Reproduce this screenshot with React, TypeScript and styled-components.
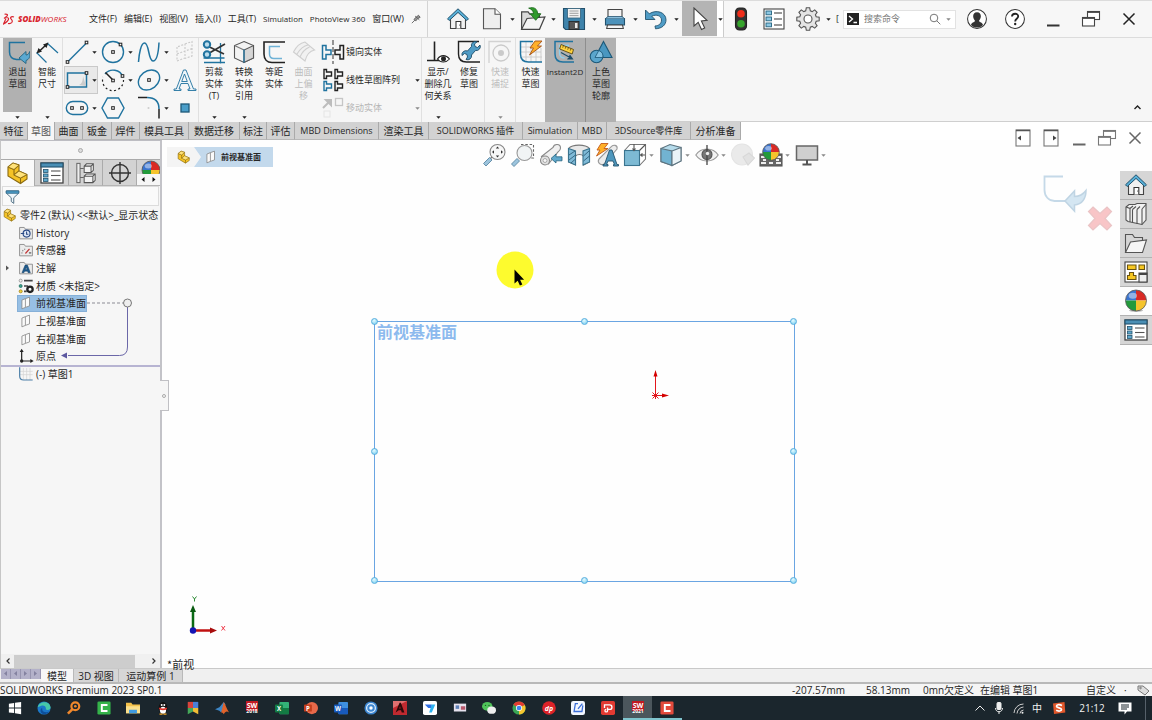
import React from "react";
import styled, { createGlobalStyle, css } from "styled-components";

const INK = "#3a3a3a";
const BLUE = "#20739f";
const SKY = "#6fb2d6";
const RED = "#d9252f";

const GlobalStyle = createGlobalStyle`
  *, *::before, *::after { box-sizing: border-box; }
  html, body { margin: 0; padding: 0; }
  body {
    font-family: "Open Sans", "Noto Sans CJK SC", sans-serif;
    font-size: 10px;
    line-height: 12px;
    color: #262626;
    background: #fff;
    overflow: hidden;
  }
  button, input { font: inherit; color: inherit; margin: 0; padding: 0; border: 0; background: none; }
  a { color: inherit; text-decoration: none; }
  svg { display: block; flex: none; }
`;

const Shell = styled.div`
  display: flex;
  flex-direction: column;
  min-height: 100vh;
`;

/* ---------- icon helper ---------- */

type IconProps = { s?: number; vb?: string; w?: number; h?: number; children?: React.ReactNode };
const Icon = ({ s = 24, w, h, vb = "0 0 24 24", children }: IconProps) => (
  <svg width={w ?? s} height={h ?? s} viewBox={vb} fill="none" stroke={INK} strokeWidth="1.1" aria-hidden="true">
    {children}
  </svg>
);

const Caret = ({ dim = false }: { dim?: boolean }) => (
  <svg width="5" height="3" viewBox="0 0 5 3" aria-hidden="true">
    <path d="M0.3 0.3h4.4L2.5 2.7z" fill={dim ? "#8a8a8a" : "#222"} />
  </svg>
);

const Node = ({ x, y }: { x: number; y: number }) => (
  <rect x={x - 1.3} y={y - 1.3} width="2.6" height="2.6" fill="#fff" stroke="#222" strokeWidth="1" />
);

/* ---------- drawings ---------- */

const HomeIcon = () => (
  <Icon>
    <path d="M4.5 11v10.5h15V11L12 4z" fill="#f1f1f1" stroke="#444" />
    <path d="M1.500 11.800 12 1.800l10.500 10-1.700 1.700L12 5.400 3.200 13.500z" fill="#58b0d8" stroke="#24536e" strokeWidth="1" />
    <path d="M10 21.500v-7h4.800v7" fill="#fff" stroke="#333" />
    <circle cx="13.500" cy="18" r="0.500" fill="#333" stroke="none" />
  </Icon>
);
const NewIcon = () => (
  <Icon>
    <path d="M3.500 1.800h11.500l5.500 5.500v14.500h-17z" fill="#eee" stroke="#555" />
    <path d="M15 1.800v5.500h5.500" fill="#fff" stroke="#555" />
  </Icon>
);
const OpenIcon = () => (
  <Icon s={26}>
    <path d="M1.500 21V5.500h6l1.500 2h9V21z" fill="#d9d9d9" stroke="#444" />
    <path d="M1.500 21.500 6.500 11.500l16.500-1.500-5 11.500z" fill="#f4f4f4" stroke="#444" />
    <path d="M8 2c5-1.500 8 .5 8.300 5.200h3l-4.800 6-5-6h3C12.300 4.500 11 3 8 2z" fill="#2f9a2b" stroke="#1e6b1d" strokeWidth=".8" />
  </Icon>
);
const SaveIcon = () => (
  <Icon>
    <path d="M1.500 1.500h21v21h-19l-2-2z" fill="#3e83ab" stroke="#23506c" />
    <rect x="5.500" y="1.500" width="13" height="9.500" fill="#f2f2f2" stroke="#35627c" strokeWidth=".8" />
    <path d="M7.500 4h9M7.500 6.300h9M7.500 8.600h9" stroke="#8a8a8a" strokeWidth=".8" />
    <rect x="7" y="14.500" width="10" height="8" fill="#555" stroke="#222" strokeWidth=".8" />
    <rect x="13" y="16" width="2.500" height="5" fill="#e9e9e9" stroke="none" />
  </Icon>
);
const PrintIcon = () => (
  <Icon>
    <path d="M5 12V2.500h14V12" fill="#f5f5f5" stroke="#444" />
    <path d="M2.500 11.500h19v6.500h-19z" fill="#4d92ba" stroke="#24536e" />
    <path d="M2.500 11.500 5 9.500h14l2.500 2" fill="#89bddb" stroke="#24536e" strokeWidth=".8" />
    <path d="M4.500 18h15l.8 3.500H3.700z" fill="#f5f5f5" stroke="#444" />
  </Icon>
);
const UndoIcon = () => (
  <Icon>
    <path d="M1.500 3v9.500h9.500L7.800 9.300c4.500-2.500 9.700-.5 9.700 3.700 0 3.500-2.500 5.700-6.500 6l.5 2.800c6.500-.3 10.500-3.800 10.500-9C22 5.500 12.500 2 5.300 6.800z" fill="#4f9cc6" stroke="#24536e" strokeWidth=".9" />
  </Icon>
);
const PointerIcon = () => (
  <Icon>
    <path d="M6 1v18l4.200-3.700 3.300 7.200 3.200-1.500-3.300-7 5.600-.6z" fill="#fff" stroke="#444" />
  </Icon>
);
const TrafficIcon = () => (
  <Icon>
    <rect x="6.500" y="1" width="11" height="22" rx="4" fill="#333" stroke="#222" />
    <circle cx="12" cy="6.800" r="3.800" fill="#ef2d1a" stroke="none" />
    <circle cx="12" cy="16.800" r="3.800" fill="#37a52d" stroke="none" />
  </Icon>
);
const ListIcon = () => (
  <Icon>
    <rect x="2" y="2" width="20" height="20" fill="#fff" stroke="#444" />
    {[4, 10, 16].map((y) => (
      <g key={y}>
        <rect x="4" y={y} width="5.500" height="3.800" fill="#8cc8e4" stroke="#24637f" strokeWidth=".9" />
        <path d={`M12 ${y + 2}h8`} stroke="#444" />
      </g>
    ))}
  </Icon>
);
const GearIcon = () => (
  <Icon>
    <path
      d="M10.300 1.500h3.400l.6 3 1.900.8 2.500-1.700 2.400 2.400-1.700 2.500.8 1.900 3 .6v3.400l-3 .6-.8 1.900 1.700 2.500-2.400 2.400-2.500-1.700-1.900.8-.6 3h-3.400l-.6-3-1.900-.8-2.500 1.700-2.400-2.400 1.700-2.500-.8-1.900-3-.6v-3.400l3-.6.8-1.900-1.700-2.500 2.400-2.400 2.500 1.700 1.900-.8z"
      fill="#e4e4e4"
      stroke="#555"
      transform="translate(0 -.7)"
    />
    <circle cx="12" cy="12" r="4" fill="#fff" stroke="#555" />
  </Icon>
);
const PinIcon = () => (
  <Icon s={10}>
    <path d="M10 5 20 14M18 3l4 5-6 3-5 6-4-4 5-5zM9 15l-7 7" stroke="#555" strokeWidth="2" fill="#999" />
  </Icon>
);
const UserIcon = () => (
  <Icon s={22}>
    <circle cx="12" cy="12" r="10.300" fill="#fff" stroke="#333" />
    <path d="M12 4.500c3 0 4.200 2 4.200 4.500S14.800 13 14.200 14c0 1.500 4 1.800 4.300 4.500-3.500 3.800-9.500 3.800-13 0C5.800 15.800 9.800 15.500 9.800 14 9.200 13 7.800 11.500 7.800 9S9 4.500 12 4.500z" fill="#333" stroke="none" />
  </Icon>
);
const HelpIcon = () => (
  <Icon s={22}>
    <circle cx="12" cy="12" r="10.300" fill="#fff" stroke="#333" />
    <path d="M8.700 9.300c.2-4 6.800-4 6.800-.2 0 2.700-3.300 2.500-3.300 5.500" stroke="#222" strokeWidth="2" />
    <circle cx="12.200" cy="17.500" r="1.300" fill="#222" stroke="none" />
  </Icon>
);
const MinIcon = ({ c = "#333" }: { c?: string }) => (
  <Icon w={20} h={20} vb="0 0 20 20">
    <path d="M4 16.500h12.500" stroke={c} strokeWidth="2" />
  </Icon>
);
const RestoreIcon = ({ c = "#444" }: { c?: string }) => (
  <Icon w={20} h={20} vb="0 0 20 20">
    <rect x="6.500" y="2.500" width="12" height="8" fill="#fff" stroke={c} />
    <path d="M6 3h13" stroke={c} strokeWidth="1.800" />
    <rect x="1.500" y="8.500" width="12" height="8.500" fill="#fff" stroke={c} />
    <path d="M1 9h13" stroke={c} strokeWidth="1.800" />
  </Icon>
);
const CloseIcon = ({ c = "#222" }: { c?: string }) => (
  <Icon w={20} h={20} vb="0 0 20 20">
    <path d="m4.500 4.500 11 11m0-11-11 11" stroke={c} strokeWidth="1.500" />
  </Icon>
);
const PageArrowIcon = ({ right = false }: { right?: boolean }) => (
  <Icon w={20} h={20} vb="0 0 20 20">
    <rect x="3" y="2" width="14" height="16" stroke="#777" fill="#fff" />
    <path d="M3 2.500h14" stroke="#555" strokeWidth="1.500" />
    <path d={right ? "M12 7.500v5l3.500-2.500z" : "M8 7.500v5L4.500 10z"} fill="#444" stroke="none" />
  </Icon>
);

/* ribbon drawings */
const ExitSketchIcon = () => (
  <Icon>
    <path d="M19 2.500H3.500V12c0 4 2.500 7 7 7.500h4" stroke={BLUE} strokeWidth="1.500" />
    <path d="M13 18 20 11.500v3.500c1.500 0 3-1 3.700-3.500.8 5.500-.7 8-3.700 9v3z" fill="#5aa9d2" stroke="#24637f" strokeWidth=".9" />
  </Icon>
);
const DimensionIcon = () => (
  <Icon>
    <path d="m1.500 12.500 10 10M12 3l11 10" stroke={BLUE} strokeWidth="1.200" />
    <path d="M3.500 12 12 4" stroke="#222" strokeWidth="1.500" />
    <path d="m1.500 13.500 2-5.500 3.500 3.500zM13.500 2.500l-2 5.500L8 4.500z" fill="#222" stroke="none" />
  </Icon>
);
const LineIcon = () => (
  <Icon>
    <path d="M3 21.500 21.500 3" stroke={BLUE} strokeWidth="1.400" />
    <Node x={2.500} y={22} /><Node x={21.500} y={2.500} />
  </Icon>
);
const CircleIcon = () => (
  <Icon>
    <circle cx="12" cy="12" r="10.500" stroke={BLUE} strokeWidth="1.400" />
    <Node x={12} y={12} /><Node x={19.500} y={4.500} />
  </Icon>
);
const SplineIcon = () => (
  <Icon>
    <path d="M1.500 22C2 14 4 3 7.500 3c5 0 3.500 18 8.500 18 4 0 5.500-9 6-18.500" stroke={BLUE} strokeWidth="1.500" />
  </Icon>
);
const PlaneGhostIcon = () => (
  <Icon>
    <path d="M4 7v14l8-3V4zM12 4l7-2.500V16l-7 2.500M4 14l15-5.500" stroke="#c9c9c9" strokeDasharray="2 1.500" />
  </Icon>
);
const RectIcon = () => (
  <Icon>
    <rect x="2.500" y="5" width="19" height="14" fill="#eee" stroke={BLUE} strokeWidth="1.500" />
    <path d="M14 17c3-1 4-5 4-9l3 10z" fill="#ccc" stroke="none" />
    <Node x={2.500} y={19} /><Node x={21.500} y={5} />
  </Icon>
);
const ArcIcon = () => (
  <Icon>
    <path d="M4 6A10.500 10.500 0 0 1 22 9" stroke={BLUE} strokeWidth="1.400" />
    <path d="M22.500 12A10.500 10.500 0 1 1 2 9" stroke="#222" strokeDasharray="2 2.500" strokeWidth="1.200" />
    <path d="M4.500 4.500 12 12" stroke="#222" strokeWidth="1.500" />
    <Node x={12} y={12.500} /><Node x={21.500} y={8} />
  </Icon>
);
const EllipseIcon = () => (
  <Icon>
    <ellipse cx="12" cy="12" rx="11.500" ry="9" transform="rotate(-38 12 12)" stroke={BLUE} strokeWidth="1.400" />
    <Node x={12} y={12} />
  </Icon>
);
const LetterIcon = () => (
  <Icon>
    <path d="M10.500 2h2.500l7.500 19H23v1.500h-8V21h2l-2-5.500H8L6 21h2v1.500H1V21h2.300zM8.700 13.500h5.600L11.500 6z" fill="#eef5f9" stroke={BLUE} strokeWidth=".9" />
  </Icon>
);
const SlotIcon = () => (
  <Icon>
    <rect x="1.300" y="5.500" width="21.400" height="13" rx="6.500" stroke={BLUE} strokeWidth="1.400" />
    <Node x={7} y={12} /><Node x={17} y={12} />
  </Icon>
);
const PolygonIcon = () => (
  <Icon>
    <path d="M6.500 2h11L23 12l-5.500 10h-11L1 12z" stroke={BLUE} strokeWidth="1.400" />
    <Node x={12} y={12} />
  </Icon>
);
const FilletIcon = () => (
  <Icon>
    <path d="M1 1.500h9M22 13v9.500" stroke="#222" strokeWidth="1.500" />
    <path d="M10 1.500c8 0 12 4 12 11.500" stroke={BLUE} strokeWidth="1.500" />
    <circle cx="11.500" cy="12" r="1" fill="#ccc" stroke="none" />
  </Icon>
);
const PointIcon = () => (
  <Icon>
    <rect x="8" y="8" width="8" height="8" fill="#4a9dc8" stroke="#1c5878" strokeWidth="1.300" />
  </Icon>
);
const TrimIcon = () => (
  <Icon>
    <path d="M2 22.500h21M18.500 3v20.500M1.500 18h21" stroke={BLUE} strokeWidth="1.300" />
    <path d="M6.500 6.500 22 14M6.500 13.500 23 4" stroke="#333" strokeWidth="1.700" />
    <circle cx="5" cy="4.500" r="3.200" stroke={BLUE} fill="#bcdced" strokeWidth="2" />
    <circle cx="5" cy="14.500" r="3.200" stroke={BLUE} fill="#bcdced" strokeWidth="2" />
  </Icon>
);
const ConvertIcon = () => (
  <Icon>
    <path d="M12 1.500 21.500 5.500v12.500L12 22.500 2.500 18V5.500z" fill="#f3f3f3" stroke="#555" />
    <path d="M12 10v12.500L21.500 18V5.500z" fill="#d5d5d5" stroke="#555" />
    <path d="M2.500 5.500 12 10" stroke="#777" />
    <path d="M12 9.500V22.500" stroke={BLUE} strokeWidth="1.300" />
  </Icon>
);
const OffsetIcon = () => (
  <Icon>
    <path d="M23 2H2v12c0 5 3 8.500 8 8.500h13" stroke="#222" strokeWidth="1.600" />
    <path d="M18 6.500H7.500V14c0 3 1.500 4.500 4.500 4.500h8" stroke={SKY} strokeWidth="1.500" />
  </Icon>
);
const SurfaceOffsetIcon = () => (
  <Icon>
    <path d="M1.500 12C4 7 8 3 13 2l9.500 8c-5 1-8 5-9.500 11zM5 14c3-5 6-8 11-9M8 17c2-5 5-8 9.500-10" stroke="#cfcfcf" fill="#f1f1f1" />
  </Icon>
);
const MirrorIcon = () => (
  <Icon>
    <path d="M12 0v24" stroke="#444" strokeDasharray="5 2" />
    <path d="M1.500 5.500h3.500v4.500h5v4.500H5v4.500H1.500z" stroke={BLUE} strokeWidth="1.500" />
    <path d="M22.500 5.500H19v4.500h-5v4.500h5v4.500h3.500z" stroke="#222" strokeWidth="1.500" />
  </Icon>
);
const PatternIcon = () => (
  <Icon>
    {[
      [3, 1.5, "#222"], [14, 1.5, "#222"], [3, 13.5, BLUE], [14, 13.5, "#222"],
    ].map(([x, y, c], i) => (
      <path key={i} d={`M${x} ${y}h2.500v2.500h5v4h-5v2.500h-2.500z`} stroke={c as string} strokeWidth="1.400" />
    ))}
  </Icon>
);
const MoveIcon = () => (
  <Icon>
    <path d="m2 12 6-6M5 4h5v5z" stroke="#bdbdbd" fill="#bdbdbd" strokeWidth="2" />
    <rect x="14.500" y="2.500" width="7" height="7" stroke="#c6c6c6" strokeWidth="1.300" />
    <rect x="3" y="15" width="6" height="6" stroke="#e6e6e6" />
  </Icon>
);
const RelationsIcon = () => (
  <Icon>
    <path d="M8.500 1.500v19M1 20.500h12" stroke="#222" strokeWidth="1.600" />
    <path d="M11.500 19c3-4.500 8.500-4.500 12 0-3.500 4-9 4-12 0z" fill="#fff" stroke="#222" />
    <circle cx="17.500" cy="18.800" r="2.500" fill="#222" stroke="none" />
  </Icon>
);
const RepairIcon = () => (
  <Icon>
    <path d="M22 1.500H1.500V14c0 5 3 8 8 8H23" stroke="#222" strokeWidth="1.400" />
    <path d="M9 19.500a4 4 0 0 0 5.500-4.500l4-4.500a4 4 0 0 0 4.500-5.500L20.500 7.500 18 6.500 17.500 4 20 1.800A4 4 0 0 0 14.500 6.500L10.500 11a4 4 0 0 0-5.500 4.500L7.500 13.500l2.500 1 .5 2.500z" fill="#4f9cc6" stroke="#1c4c68" strokeWidth=".9" />
  </Icon>
);
const SnapIcon = () => (
  <Icon>
    <path d="M1 23V1.500h22" stroke="#d2d2d2" strokeWidth="1.300" />
    <circle cx="13" cy="13" r="8" stroke="#cacaca" strokeWidth="1.300" />
    <circle cx="13" cy="13" r="3" fill="#cacaca" stroke="none" />
  </Icon>
);
const RapidIcon = () => (
  <Icon>
    <path d="M7 2v19M12 2v20M17 2v20M2 7h20M2 12h20M3 17h20M22 8v14" stroke="#c9c9c9" strokeWidth=".9" />
    <path d="M14 1.500H1.500V14c0 5 3 8 8 8H23" stroke={BLUE} strokeWidth="1.500" />
    <path d="M16 1h7l-4.500 5h4L10.500 15l4-7H11z" fill="#ffb028" stroke="#a5541a" strokeWidth=".9" />
  </Icon>
);
const Instant2DIcon = () => (
  <Icon>
    <path d="M20 1.500H2V14c0 5 3 8 8 8h11" stroke={BLUE} strokeWidth="1.500" />
    <path d="M16 5.500H6.500V13c0 3 2 5 5 5" stroke="#8fd0ee" strokeWidth="1.300" />
    <path d="m8 4.500 12.500 5-1.300 4.500-12.500-5z" fill="#ffd23d" stroke="#5c4a12" strokeWidth=".9" />
    <path d="m10.500 5.500-.8 2.200M13 6.500l-.8 2.200M15.500 7.500l-.8 2.200M18 8.500l-.8 2.200" stroke="#5c4a12" strokeWidth=".8" />
    <path d="m8 12.500 9 5M19.500 19l-4.500 0 2-3.500z" stroke="#1c4c68" fill="#1c4c68" />
  </Icon>
);
const ShadedIcon = () => (
  <Icon>
    <path d="M14.500 1.500 23 17.500H6z" fill="#4a97c0" stroke="#1c5878" />
    <circle cx="7.500" cy="16.500" r="6.300" fill="#5aa5cc" stroke="#1c5878" />
    <path d="M6 17.500 9.800 10.500a6.300 6.300 0 0 1 4 7z" fill="#86c3e2" stroke="#1c5878" strokeWidth=".8" />
  </Icon>
);

/* view toolbar drawings */
const ZoomFitIcon = () => (
  <Icon>
    <circle cx="14.500" cy="9" r="7.500" fill="#f7f7f7" stroke="#888" />
    <path d="M14.500 3.500l1.700 2h-3.400zM14.500 14.500l1.700-2h-3.400zM9 9l2-1.700v3.400zM20 9l-2-1.700v3.400z" fill="#333" stroke="none" />
    <path d="m9 14-1.500 1.500" stroke="#777" strokeWidth="1.500" />
    <path d="m6.500 14.500 2.500 2.500-6 6-2.500-2.500z" fill="#9cc4dd" stroke="#5c88a4" strokeWidth=".9" />
  </Icon>
);
const ZoomAreaIcon = () => (
  <Icon>
    <path d="M10 1.500h12.500V15H18" stroke="#666" strokeDasharray="2.500 1.800" />
    <circle cx="13.500" cy="10" r="7.500" fill="#f1f4f5" stroke="#999" />
    <path d="m6 15.500 2.500 2.500-5.500 5.500L.5 21z" fill="#9cc4dd" stroke="#5c88a4" strokeWidth=".9" />
  </Icon>
);
const PrevViewIcon = () => (
  <Icon>
    <path d="M2.500 13.500 14 4.500c1-4 7.500-4 7.500.5 0 2-1 3-2.500 4L9.500 21z" fill="#f0f0f0" stroke="#888" />
    <circle cx="6" cy="17.500" r="4.500" fill="#e2e2e2" stroke="#888" />
    <circle cx="6" cy="17.500" r="2" fill="#f6f6f6" stroke="#999" strokeWidth=".8" />
    <path d="M12 15.500 17 11v2.800h6v4h-6V20z" fill="#5fa8cc" stroke="#24637f" strokeWidth=".8" />
  </Icon>
);
const SectionIcon = () => (
  <Icon>
    <path d="M1.500 5.500c4-4.500 17-4.500 21 0V19l-6 3v-9c-2-2-6-2-8 0v9l-7-3z" fill="#e8e8e8" stroke="#777" />
    <path d="M1.500 5.500 8.500 8v14l-7-3zM22.500 5.500 16 8v14l6.500-3z" fill="#7fbad7" stroke="#3a748f" />
    <path d="m2 12 6-4M2 17l6.500-5M4 20l4.500-4M16.500 13l5.500-5M16.500 18l6-5" stroke="#24536e" strokeWidth=".8" />
  </Icon>
);
const DynamicAnnIcon = () => (
  <Icon>
    <path d="m4 16 12-12c2-3 7-2 6 2L9 21c-4 2-7-2-5-5z" fill="#ececec" stroke="#999" />
    <path d="M6 0.500h7L9 5.500h4L1.500 13l3.500-6H2z" fill="#ffb028" stroke="#c25a1c" strokeWidth=".9" />
    <path d="M14.500 7h2.500l5 14.500h1.500V23h-5v-1.500h1L18 18h-5l-1.500 3.500H13V23H8v-1.500h1.500z" fill="#4e97bd" stroke="#24536e" strokeWidth=".9" />
  </Icon>
);
const OrientIcon = () => (
  <Icon>
    <path d="M1.500 7.500 7 1.500h15.500V16L16.500 22.500" stroke="#777" fill="#fff" />
    <rect x="1.500" y="7.500" width="15" height="15" fill="#7dbad4" stroke="#3a748f" />
    <path d="m16.500 7.500 6-6M11 1v6M9.500 5.500 11 7.500l1.500-2M22 12h-4.500M19.500 10.500 17.500 12l2 1.500" stroke="#555" />
  </Icon>
);
const CubeIcon = () => (
  <Icon>
    <path d="M2 5.500 11 1.500l11 3v13.500l-9 4.500L2 18.500z" fill="#b5dbeb" stroke="#5d7480" />
    <path d="M2 5.500 13 8v14.500L2 18.500z" fill="#72b3d1" stroke="#5d7480" />
    <path d="M13 8l9-3.500v13.500l-9 4.500z" fill="#eaf3f7" stroke="#5d7480" />
  </Icon>
);
const EyeIcon = () => (
  <Icon>
    <path d="M.8 12C6 4 18 4 23.200 12 18 20 6 20 .8 12z" fill="#f3f3f3" stroke="#999" />
    <circle cx="12" cy="11.500" r="5" fill="#777" stroke="#555" />
    <path d="M12 2v20" stroke="#444" strokeWidth="1.300" />
    <circle cx="12.500" cy="10.500" r="1.700" fill="#eee" stroke="none" />
  </Icon>
);
const GhostSphereIcon = () => (
  <Icon>
    <circle cx="11" cy="11.500" r="10.500" fill="#eaeaea" stroke="#e4e4e4" />
    <path d="m12 14 6-4 5.500 5-6.500 7z" fill="#e2e2e2" stroke="#d8d8d8" />
  </Icon>
);
const Ball = ({ x, y, r }: { x: number; y: number; r: number }) => (
  <g stroke="none">
    <path d={`M${x} ${y}V${y - r}A${r} ${r} 0 0 0 ${x - r} ${y}z`} fill="#3a74cf" />
    <path d={`M${x} ${y}V${y - r}A${r} ${r} 0 0 1 ${x + r} ${y}z`} fill="#d92a25" />
    <path d={`M${x} ${y}V${y + r}A${r} ${r} 0 0 1 ${x - r} ${y}z`} fill="#239a3b" />
    <path d={`M${x} ${y}V${y + r}A${r} ${r} 0 0 0 ${x + r} ${y}z`} fill="#f5c42c" />
    <ellipse cx={x - r * 0.3} cy={y - r * 0.45} rx={r * 0.4} ry={r * 0.28} fill="#fff" opacity=".45" />
    <circle cx={x} cy={y} r={r} fill="none" stroke="#555" strokeWidth=".8" />
  </g>
);
const SceneIcon = () => (
  <Icon>
    <rect x="1" y="11" width="22" height="12" fill="#666" stroke="#555" />
    <path d="M2 14h4M18 14h4M2 20h5M10 20h4M17 20h5M4 17h3M17 17h3" stroke="#eee" strokeWidth="1.800" />
    <Ball x={12} y={9} r={8.3} />
  </Icon>
);
const MonitorIcon = () => (
  <Icon>
    <rect x="1.500" y="3" width="21" height="14" fill="#cfcfcf" stroke="#666" strokeWidth="1.500" />
    <path d="M12 17v4M7.500 21.500h9" stroke="#555" strokeWidth="2" />
  </Icon>
);

/* feature tree drawings */
const PartIcon = ({ s = 14 }: { s?: number }) => (
  <Icon s={s}>
    <path d="m2 6 5-4 6 2v6l8 3.500V18l-6.500 4.500L2 15z" fill="#f5c326" stroke="#8a6a10" />
    <path d="m2 6 6 2.500V14l6.500 3v5.500M8 8.500 13 4M8 14l5-4M14.500 17 21 13.500" stroke="#8a6a10" fill="none" />
    <path d="m2 6 5-4 6 2-5 4.500zM8 14l5-4 8 3.500-6.500 3.500z" fill="#ffe27a" stroke="#8a6a10" strokeWidth=".8" />
  </Icon>
);
const PropsIcon = () => (
  <Icon>
    <rect x="1" y="2" width="22" height="20" fill="#fff" stroke="#444" strokeWidth="1.300" />
    <rect x="1" y="2" width="22" height="4" fill="#4a8fb5" stroke="#24536e" />
    {[8.5, 13, 17.5].map((y) => (
      <g key={y}>
        <rect x="3.500" y={y} width="4.500" height="3" fill="#5fa8cc" stroke="#24536e" strokeWidth=".8" />
        <path d={`M11 ${y + 1.5}h9.500`} stroke="#555" />
      </g>
    ))}
  </Icon>
);
const ConfigIcon = () => (
  <Icon s={22}>
    <rect x="2" y="1.500" width="3.500" height="21" fill="#eee" stroke="#666" />
    <path d="M5.500 7h4M5.500 17h4" stroke="#666" />
    <path d="M10 4.500 12.500 2H20v7l-2.500 2.500H10zM10 4.500h7.500v7M17.500 4.500 20 2M10 15.500l2.500-2.500H22v7l-2.500 2.500H10zM10 15.500h9.500v7M19.500 15.500 22 13" fill="#f2f2f2" stroke="#555" />
  </Icon>
);
const TargetIcon = () => (
  <Icon>
    <circle cx="12" cy="12" r="8.500" stroke="#333" strokeWidth="1.400" />
    <path d="M12 1v22M1 12h22" stroke="#333" strokeWidth="1.400" />
  </Icon>
);
const FunnelIcon = () => (
  <Icon s={15}>
    <path d="M2 3h20v3.500L14 14v9l-4-3v-6L2 6.500z" fill="#f0f6fa" stroke="#4c6c80" strokeWidth="1.500" />
    <path d="M2 3h20v4H2z" fill="#4a97c0" stroke="#2d6688" />
  </Icon>
);
const Folder = ({ children }: { children?: React.ReactNode }) => (
  <Icon s={14}>
    <path d="M1 22V2.500h8l2 3h12V22z" fill="#ececec" stroke="#888" strokeWidth="1.500" />
    {children}
  </Icon>
);
const HistoryIcon = () => (
  <Folder>
    <circle cx="13" cy="13" r="6" fill="#dfe8f6" stroke="#2b4b86" strokeWidth="2" />
    <path d="M13 9.500V14h3M3 13h6" stroke="#2b4b86" strokeWidth="1.800" />
  </Folder>
);
const SensorIcon = () => (
  <Folder>
    <path d="M5 18a8 8 0 0 1 7-8" stroke="#888" strokeWidth="2" strokeDasharray="2 2" />
    <path d="m11 18 7-8" stroke="#c03030" strokeWidth="2" />
    <path d="M17 17h4" stroke="#555" strokeWidth="2" />
  </Folder>
);
const NoteIcon = () => (
  <Folder>
    <path d="M10.500 7h4l5 13h-4l-.8-2.500h-5L8.500 20H5zM11 14.500h2.800l-1.300-4z" fill="#1e5a8c" stroke="#153f63" strokeWidth=".8" />
  </Folder>
);
const MaterialIcon = () => (
  <Icon s={16}>
    <circle cx="4" cy="4" r="2.300" fill="#eee" stroke="#888" />
    <circle cx="4" cy="12" r="2.300" fill="#38a08a" stroke="#1e6b5c" />
    <circle cx="4" cy="20" r="2.300" fill="#f3d23e" stroke="#9a7c10" />
    <path d="M9 4h13M9 12h6M9 20h4" stroke="#444" strokeWidth="2.500" />
    <circle cx="18" cy="17" r="4" stroke="#222" strokeWidth="3.500" fill="#fff" />
  </Icon>
);
const PlaneIcon = () => (
  <Icon s={14}>
    <path d="M5 7v15l6-2.500V4.500zM11 4.500 18 2v15l-7 2.500" fill="#fafafa" stroke="#888" strokeWidth="1.400" />
  </Icon>
);
const OriginIcon = () => (
  <Icon s={16}>
    <path d="M5.500 20V4M5.500 19.500H20" stroke="#222" strokeWidth="1.800" />
    <path d="m5.500 1 3 5h-6zM23.500 19.500l-5 3v-6z" fill="#222" stroke="none" />
    <circle cx="5.500" cy="19.500" r="2.500" fill="#222" stroke="none" />
  </Icon>
);
const SketchIcon = () => (
  <Icon s={16}>
    <path d="M8 3v17M13 3v18M18 3v18M3 8h19M3 13h19" stroke="#d3d3d3" />
    <path d="M2.500 2v13c0 4 2 6 6 6H22" stroke="#4c7fa8" strokeWidth="1.800" />
  </Icon>
);

/* ---------- title bar ---------- */

const TitleBar = styled.header`
  display: flex;
  align-items: stretch;
  height: 38px;
  padding-right: 4px;
  background: #f7f7f7;
  border-top: 1px solid #dcdcdc;
  border-bottom: 1px solid #dcdcdc;
`;
const Brand = styled.div`
  display: flex;
  align-items: center;
  gap: 3px;
  width: 85px;
  padding-left: 3px;
  color: ${RED};
  font-size: 8px;
  font-style: italic;
  b { font-weight: 800; }
`;
const MenuBar = styled.nav`
  display: flex;
  align-items: center;
  gap: 7px;
  width: 343px;
  padding-left: 4px;
  border-right: 1px solid #d4d4d4;
  font-size: 9px;
  white-space: nowrap;
`;
const MenuButton = styled.button<{ $latin?: boolean }>`
  font-size: ${(p) => (p.$latin ? 8 : 9)}px;
  flex: none;
`;
const QuickTools = styled.div`
  display: flex;
  align-items: stretch;
  padding-left: 10px;
`;
const QuickTool = styled.button<{ $w: number; $on?: boolean }>`
  display: flex;
  align-items: center;
  justify-content: center;
  width: ${(p) => p.$w}px;
  ${(p) => p.$on && css`background: #b4b4b4; margin-bottom: 1px;`}
`;
const QuickCaret = styled.button<{ $w?: number; $boxed?: boolean }>`
  display: flex;
  align-items: center;
  justify-content: center;
  width: ${(p) => p.$w ?? 12}px;
  ${(p) => p.$boxed && css`border-right: 1px solid #ccc; background: #fff;`}
`;
const Clipped = styled.span`
  align-self: center;
  width: 3px;
  margin: 0 7px 0 4px;
  overflow: hidden;
  font-size: 9px;
`;
const SearchBox = styled.form`
  display: flex;
  align-items: center;
  align-self: center;
  gap: 5px;
  width: 113px;
  height: 19px;
  margin-left: -3px;
  padding: 0 4px 0 3px;
  background: #fff;
  border: 1px solid #e2e2e2;
  font-size: 9px;
  input { flex: 1; min-width: 0; outline: 0; }
  input::placeholder { color: #777; opacity: 1; }
`;
const WindowTools = styled.div`
  display: flex;
  margin-left: auto;
`;

const quick: [string, React.ReactNode][] = [
  ["新建", <NewIcon />],
  ["打开", <OpenIcon />],
  ["保存", <SaveIcon />],
  ["打印", <PrintIcon />],
  ["撤销", <UndoIcon />],
];

const Title = () => (
  <TitleBar>
    <Brand>
      <svg width="12" height="12" viewBox="0 0 24 24" fill="none" stroke={RED} strokeWidth="2.400" aria-hidden="true">
        <path d="M3 2.500c5-1 8 1 4 4.500L2 11M7 9c6 0 5 4 1 8-2 2-5 4-7 5l5-11" />
        <path d="M22 8c-4-1.500-8 0-6.500 3s5 4 2.500 7.500c-1.500 2-5 3-8 2.500" />
      </svg>
      <span><b>SOLID</b>WORKS</span>
    </Brand>
    <MenuBar>
      {["文件(F)", "编辑(E)", "视图(V)", "插入(I)", "工具(T)"].map((m) => <MenuButton key={m}>{m}</MenuButton>)}
      <MenuButton $latin>Simulation</MenuButton>
      <MenuButton $latin>PhotoView 360</MenuButton>
      <MenuButton>窗口(W)</MenuButton>
      <MenuButton aria-label="固定"><PinIcon /></MenuButton>
    </MenuBar>
    <QuickTools>
      <QuickTool $w={39} aria-label="主页"><HomeIcon /></QuickTool>
      {quick.map(([name, icon]) => (
        <React.Fragment key={name}>
          <QuickTool $w={29} aria-label={name}>{icon}</QuickTool>
          <QuickCaret aria-label={name + "选项"}><Caret /></QuickCaret>
        </React.Fragment>
      ))}
      <QuickTool $w={35} $on aria-label="选择"><PointerIcon /></QuickTool>
      <QuickCaret $w={7} $boxed aria-label="选择选项"><Caret /></QuickCaret>
      <QuickTool $w={33} aria-label="重建模型"><TrafficIcon /></QuickTool>
      <QuickTool $w={34} aria-label="文件属性"><ListIcon /></QuickTool>
      <QuickTool $w={34} aria-label="选项"><GearIcon /></QuickTool>
      <QuickCaret $w={7} aria-label="更多选项"><Caret /></QuickCaret>
      <Clipped>[</Clipped>
    </QuickTools>
    <SearchBox>
      <svg width="12" height="12" viewBox="0 0 12 12" aria-hidden="true">
        <rect width="12" height="12" fill="#222" />
        <path d="m2 3 3.500 3L2 9M6.500 9.500H10" stroke="#fff" strokeWidth="1.300" fill="none" />
      </svg>
      <input aria-label="搜索命令" placeholder="搜索命令" />
      <svg width="12" height="12" viewBox="0 0 12 12" fill="none" stroke="#777" aria-hidden="true">
        <circle cx="5" cy="5" r="3.800" /><path d="m7.800 7.800 3.500 3.500" />
      </svg>
      <Caret dim />
    </SearchBox>
    <WindowTools>
      <QuickTool $w={38} aria-label="登录"><UserIcon /></QuickTool>
      <QuickTool $w={38} aria-label="帮助"><HelpIcon /></QuickTool>
      <QuickTool $w={38} aria-label="最小化"><MinIcon /></QuickTool>
      <QuickTool $w={38} aria-label="还原"><RestoreIcon /></QuickTool>
      <QuickTool $w={38} aria-label="关闭"><CloseIcon /></QuickTool>
    </WindowTools>
  </TitleBar>
);

/* ---------- ribbon ---------- */

const Ribbon = styled.section`
  display: flex;
  align-items: stretch;
  height: 84px;
  padding-left: 3px;
  background: #f6f6f6;
  font-size: 9px;
`;
const BigButton = styled.button<{ $w: number; $on?: boolean; $off?: boolean; $sep?: boolean; $latin?: boolean }>`
  display: flex;
  flex-direction: column;
  align-items: center;
  width: ${(p) => p.$w}px;
  padding-top: 2px;
  font-size: ${(p) => (p.$latin ? 8 : 9)}px;
  line-height: 12px;
  white-space: pre;
  text-align: center;
  background: ${(p) => (p.$on ? "#b1b1b1" : "transparent")};
  border-right: ${(p) => (p.$sep ? (p.$on ? "1px solid #8e8e8e" : "1px solid #e0e0e0") : "0")};
  color: ${(p) => (p.$off ? "#bdbdbd" : "#262626")};
`;
const BigLabel = styled.span`
  margin-top: 2px;
`;
const DropZone = styled.span<{ $plain?: boolean }>`
  display: flex;
  align-items: center;
  justify-content: center;
  align-self: stretch;
  height: 10px;
  margin-top: auto;
  background: ${(p) => (p.$plain ? "#f6f6f6" : "transparent")};
`;
const DrawGrid = styled.div`
  display: grid;
  grid-template-columns: repeat(3, 36px) 25px;
  grid-template-rows: repeat(3, 28px);
  padding-left: 2px;
  border-left: 1px solid #e0e0e0;
  border-right: 1px solid #e0e0e0;
`;
const DrawTool = styled.button<{ $on?: boolean }>`
  display: flex;
  align-items: center;
  gap: 3px;
  ${(p) => p.$on && css`
    background: #e9e9e9;
    box-shadow: inset 0 0 0 1px #c9c9c9;
    width: 34px;
    margin-left: -1px;
    padding-left: 1px;
  `}
`;
const WideColumn = styled.div`
  display: flex;
  flex-direction: column;
  width: 104px;
  padding: 0 1px 0 3px;
  border-right: 1px solid #e0e0e0;
`;
const WideButton = styled.button<{ $off?: boolean }>`
  display: flex;
  align-items: center;
  gap: 1px;
  height: 28px;
  color: ${(p) => (p.$off ? "#b5b5b5" : "#262626")};
  svg:last-child:not(:first-child) { margin-left: auto; }
`;
const RibbonEnd = styled.div`
  display: flex;
  flex: 1;
  align-items: flex-end;
  justify-content: flex-end;
  padding: 0 10px 9px 0;
  border-bottom: 1px solid #cfcfcf;
`;

type Big = { label: string; icon: React.ReactNode; w: number; on?: boolean; off?: boolean; sep?: boolean; latin?: boolean; drop?: boolean };
const BigTool = ({ label, icon, w, on, off, sep, latin, drop }: Big) => (
  <BigButton $w={w} $on={on} $off={off} $sep={sep} $latin={latin}>
    {icon}
    <BigLabel>{label}</BigLabel>
    {drop && <DropZone $plain={on}><Caret dim={off} /></DropZone>}
  </BigButton>
);

const drawTools: [string, React.ReactNode, boolean][] = [
  ["直线", <LineIcon />, true], ["圆", <CircleIcon />, true], ["样条曲线", <SplineIcon />, true], ["基准面", <PlaneGhostIcon />, false],
  ["矩形", <RectIcon />, true], ["圆弧", <ArcIcon />, true], ["椭圆", <EllipseIcon />, true], ["文字", <LetterIcon />, false],
  ["槽口", <SlotIcon />, true], ["多边形", <PolygonIcon />, false], ["圆角", <FilletIcon />, true], ["点", <PointIcon />, false],
];

const RibbonBar = () => (
  <Ribbon>
    <BigTool w={29} on drop label={"退出\n草图"} icon={<ExitSketchIcon />} />
    <BigTool w={30} drop label={"智能\n尺寸"} icon={<DimensionIcon />} />
    <DrawGrid>
      {drawTools.map(([name, icon, drop]) => (
        <DrawTool key={name} aria-label={name} $on={name === "矩形"}>
          {icon}
          {drop && <Caret />}
        </DrawTool>
      ))}
    </DrawGrid>
    <BigTool w={30} drop label={"剪裁\n实体\n(T)"} icon={<TrimIcon />} />
    <BigTool w={30} drop label={"转换\n实体\n引用"} icon={<ConvertIcon />} />
    <BigTool w={30} label={"等距\n实体"} icon={<OffsetIcon />} />
    <BigTool w={29} off label={"曲面\n上偏\n移"} icon={<SurfaceOffsetIcon />} />
    <WideColumn>
      <WideButton><MirrorIcon /><span>镜向实体</span></WideButton>
      <WideButton><PatternIcon /><span>线性草图阵列</span><Caret /></WideButton>
      <WideButton $off><MoveIcon /><span>移动实体</span><Caret dim /></WideButton>
    </WideColumn>
    <BigTool w={32} drop label={"显示/\n删除几\n何关系"} icon={<RelationsIcon />} />
    <BigTool w={31} sep label={"修复\n草图"} icon={<RepairIcon />} />
    <BigTool w={31} off sep drop label={"快速\n捕捉"} icon={<SnapIcon />} />
    <BigTool w={29} label={"快速\n草图"} icon={<RapidIcon />} />
    <BigTool w={41} on sep latin label="Instant2D" icon={<Instant2DIcon />} />
    <BigTool w={30} on label={"上色\n草图\n轮廓"} icon={<ShadedIcon />} />
    <RibbonEnd>
      <svg width="9" height="9" viewBox="0 0 9 9" fill="none" stroke="#222" strokeWidth="1.400" aria-hidden="true">
        <path d="m1.500 6 3-3 3 3" />
      </svg>
    </RibbonEnd>
  </Ribbon>
);

const TabStrip = styled.nav`
  display: flex;
  height: 18px;
  background: #fff;
`;
const RibbonTab = styled.button<{ $w: number; $on?: boolean; $latin?: boolean }>`
  width: ${(p) => p.$w}px;
  white-space: nowrap;
  text-align: center;
  font-size: ${(p) => (p.$latin ? 9 : 10)}px;
  color: ${(p) => (p.$on ? "#555" : "#262626")};
  background: ${(p) => (p.$on ? "#f6f6f6" : "#d2d2d2")};
  border-right: 1px solid #aaa;
  border-bottom: ${(p) => (p.$on ? "0" : "1px solid #b8b8b8")};
`;
const tabs: [string, number, boolean?][] = [
  ["特征", 28], ["草图", 27], ["曲面", 28], ["钣金", 29], ["焊件", 28], ["模具工具", 49], ["数据迁移", 51], ["标注", 27],
  ["评估", 28], ["MBD Dimensions", 84, true], ["渲染工具", 50], ["SOLIDWORKS 插件", 94, true], ["Simulation", 55, true],
  ["MBD", 29, true], ["3DSource零件库", 84, true], ["分析准备", 50],
];

/* ---------- left panel ---------- */

const Main = styled.main`
  display: flex;
  flex: 1;
  min-height: 0;
`;
const SidePanel = styled.aside`
  display: flex;
  flex-direction: column;
  width: 162px;
  background: #f6f6f6;
  border-top: 1px solid #bdbdc2;
  border-left: 1px solid #c6c6c6;
  border-right: 2px solid #c3c3c8;
`;
const Grip = styled.div`
  display: flex;
  align-items: center;
  justify-content: center;
  height: 18px;
  &::after {
    content: "";
    width: 5px;
    height: 5px;
    border: 1px solid #aaa;
    border-radius: 50%;
    background: #ddd;
  }
`;
const PanelTabs = styled.div`
  display: flex;
  height: 27px;
  border-top: 1px solid #aaa;
`;
const PanelTab = styled.button<{ $on?: boolean }>`
  position: relative;
  display: flex;
  align-items: center;
  justify-content: center;
  width: 34px;
  overflow: hidden;
  background: ${(p) => (p.$on ? "#f9f9f9" : "#d3d3d3")};
  border-right: 1px solid #ababab;
  border-bottom: ${(p) => (p.$on ? "0" : "1px solid #b5b5b5")};
  &:last-child { flex: 1; border-right: 0; }
`;
const TabScroller = styled.span`
  position: absolute;
  inset: auto 0 0 0;
  display: flex;
  justify-content: space-around;
  padding: 3px 0;
  background: #f6f6f6;
`;
const FilterRow = styled.div`
  display: flex;
  align-items: center;
  height: 20px;
  margin: 0 1px;
  padding-left: 2px;
  border: 1px solid #dcdcdc;
  background: #fafafa;
`;
const Tree = styled.ul`
  position: relative;
  display: flex;
  flex-direction: column;
  height: 177px;
  margin: 0;
  padding: 0;
  list-style: none;
`;
const TreeRow = styled.li<{ $root?: boolean; $after?: boolean }>`
  display: flex;
  flex: 1;
  align-items: stretch;
  min-height: 0;
  padding-left: ${(p) => (p.$root ? 0 : 16)}px;
  box-shadow: ${(p) => (p.$after ? "inset 0 2px #b7b4d2" : "none")};
`;
const TreeItem = styled.button<{ $on?: boolean }>`
  display: flex;
  align-items: center;
  white-space: nowrap;
  padding: 0 1px 0 2px;
  background: ${(p) => (p.$on ? "#97bfe4" : "transparent")};
  box-shadow: ${(p) => (p.$on ? "inset 0 0 0 1px #86b0d8" : "none")};
`;
const TreeIcon = styled.span`
  display: flex;
  justify-content: center;
  width: 14px;
  margin-right: 3px;
`;
const Expander = styled.span`
  width: 12px;
  margin-left: -12px;
  align-self: center;
`;
const Link = styled.svg`
  position: absolute;
  left: 59px;
  top: 90px;
`;
const HScroll = styled.div`
  display: flex;
  align-items: center;
  height: 14px;
  margin-top: auto;
  background: #f0f0f0;
`;
const ScrollArrow = styled.button`
  display: flex;
  justify-content: center;
  width: 13px;
`;
const ScrollTrack = styled.div`
  flex: 1;
  height: 13px;
`;
const ScrollThumb = styled.div`
  width: 91%;
  height: 13px;
  background: #cdcdcd;
`;

const Chevron = ({ right = false }: { right?: boolean }) => (
  <svg width="6" height="8" viewBox="0 0 6 8" fill="none" stroke="#333" strokeWidth="1.200" aria-hidden="true">
    <path d={right ? "m1.500 1.500 2.500 2.500-2.500 2.500" : "M4.500 1.500 2 4l2.500 2.500"} />
  </svg>
);

const treeRows: [string, React.ReactNode][] = [
  ["零件2 (默认) <<默认>_显示状态", <PartIcon />],
  ["History", <HistoryIcon />],
  ["传感器", <SensorIcon />],
  ["注解", <NoteIcon />],
  ["材质 <未指定>", <MaterialIcon />],
  ["前视基准面", <PlaneIcon />],
  ["上视基准面", <PlaneIcon />],
  ["右视基准面", <PlaneIcon />],
  ["原点", <OriginIcon />],
  ["(-) 草图1", <SketchIcon />],
];

const Panel = () => (
  <SidePanel>
    <Grip />
    <PanelTabs>
      <PanelTab $on aria-label="特征树"><PartIcon s={24} /></PanelTab>
      <PanelTab aria-label="属性"><PropsIcon /></PanelTab>
      <PanelTab aria-label="配置"><ConfigIcon /></PanelTab>
      <PanelTab aria-label="尺寸专家"><TargetIcon /></PanelTab>
      <PanelTab aria-label="外观">
        <Icon w={22} h={26} vb="0 0 22 26"><Ball x={13} y={10} r={9} /></Icon>
        <TabScroller>
          <svg width="4" height="5" viewBox="0 0 4 5" aria-hidden="true"><path d="M3.500 0v5L0.500 2.500z" fill="#111" /></svg>
          <svg width="4" height="5" viewBox="0 0 4 5" aria-hidden="true"><path d="M.5 0v5l3-2.500z" fill="#111" /></svg>
        </TabScroller>
      </PanelTab>
    </PanelTabs>
    <FilterRow><FunnelIcon /></FilterRow>
    <Tree>
      {treeRows.map(([label, icon], i) => (
        <TreeRow key={label} $root={i === 0} $after={i === 9}>
          {label === "注解" && (
            <Expander><svg width="5" height="6" viewBox="0 0 5 6" aria-hidden="true"><path d="M1 0.500v5L4 3z" fill="#555" /></svg></Expander>
          )}
          <TreeItem $on={i === 5}><TreeIcon>{icon}</TreeIcon>{label}</TreeItem>
        </TreeRow>
      ))}
      <Link width="74" height="66" viewBox="0 0 74 66" fill="none" aria-hidden="true">
        <path d="M27 7h36" stroke="#8b8b94" strokeDasharray="3 2" />
        <path d="M67.500 11v40q0 8.500-8 8.500H8" stroke="#6b67a8" />
        <path d="m1 59.500 6-3v6z" fill="#5c58a0" />
        <circle cx="67.500" cy="7" r="4" fill="#eee" stroke="#777" />
      </Link>
    </Tree>
    <HScroll>
      <ScrollArrow aria-label="向左"><Chevron /></ScrollArrow>
      <ScrollTrack><ScrollThumb /></ScrollTrack>
      <ScrollArrow aria-label="向右"><Chevron right /></ScrollArrow>
    </HScroll>
  </SidePanel>
);

/* ---------- graphics area ---------- */

const Viewport = styled.section`
  position: relative;
  flex: 1;
  background: #fefefe;
`;
const Breadcrumb = styled.div`
  position: absolute;
  left: 5px;
  top: 7px;
  display: flex;
  height: 20px;
`;
const CrumbRoot = styled.button`
  display: flex;
  align-items: center;
  justify-content: center;
  width: 34px;
  background: #f4f4f4;
  clip-path: polygon(0 0, 27px 0, 34px 50%, 27px 100%, 0 100%);
`;
const CrumbLeaf = styled.button`
  display: flex;
  align-items: center;
  gap: 3px;
  width: 79px;
  margin-left: -7px;
  padding-left: 10px;
  background: #c3d9ec;
  clip-path: polygon(0 0, 100% 0, 100% 100%, 0 100%, 7px 50%);
  font-size: 8px;
  font-weight: 700;
`;
const ViewTools = styled.div`
  position: absolute;
  inset: 3px 0 auto 0;
  display: flex;
  justify-content: center;
  pointer-events: none;
`;
const ViewTool = styled.button<{ $drop?: boolean }>`
  display: flex;
  align-items: center;
  gap: 2px;
  width: ${(p) => (p.$drop ? 36 : 28)}px;
`;
const DocTools = styled.div`
  position: absolute;
  right: 7px;
  top: -12px;
  display: flex;
  gap: 8px;
`;
const DocTool = styled.button`
  display: flex;
`;
const Confirm = styled.div`
  position: absolute;
  right: 39px;
  top: 35px;
  opacity: 0.42;
`;
const TaskPane = styled.nav`
  position: absolute;
  right: 0;
  top: 31px;
  width: 32px;
  background: #d6d6d6;
`;
const TaskTab = styled.button<{ $on?: boolean }>`
  display: flex;
  align-items: center;
  justify-content: center;
  width: 100%;
  height: 29px;
  background: ${(p) => (p.$on ? "#fdfdfd" : "transparent")};
  border-bottom: 1px solid #b2b2b2;
`;
const PlaneSketch = styled.div`
  position: absolute;
  left: 212px;
  top: 181px;
  width: 421px;
  height: 261px;
  border: 1px solid #6aa5e2;
`;
const PlaneName = styled.span`
  position: absolute;
  left: 2px;
  top: 0;
  font-size: 16px;
  line-height: 20px;
  font-weight: 700;
  color: #8dbaee;
  white-space: nowrap;
`;
const Handle = styled.i<{ $x: string; $y: string }>`
  position: absolute;
  left: ${(p) => p.$x};
  top: ${(p) => p.$y};
  width: 7px;
  height: 7px;
  margin: -4px;
  border-radius: 50%;
  border: 1px solid #58aede;
  background: radial-gradient(circle at 40% 30%, #e6fbff, #6cc9ee);
`;
const Floating = styled.svg<{ $x: number; $y: number }>`
  position: absolute;
  left: ${(p) => p.$x}px;
  top: ${(p) => p.$y}px;
`;
const Triad = styled.svg`
  position: absolute;
  left: 24px;
  bottom: 30px;
`;
const ViewName = styled.span`
  position: absolute;
  left: 5px;
  bottom: -3px;
  font-family: "Noto Sans CJK SC", sans-serif;
  font-size: 11px;
  line-height: 14px;
`;
const SplitterHandle = styled.button`
  position: absolute;
  left: -2px;
  top: 240px;
  width: 9px;
  height: 31px;
  border: 1px solid #c0c0c4;
  border-left: 0;
  background: #f6f6f6;
  &::after {
    content: "";
    display: block;
    width: 4px;
    height: 4px;
    margin: 0 auto;
    border: 1px solid #aaa;
    border-radius: 50%;
  }
`;

const viewTools: [string, React.ReactNode, boolean?][] = [
  ["整屏显示", <ZoomFitIcon />], ["局部放大", <ZoomAreaIcon />], ["上一视图", <PrevViewIcon />], ["剖面视图", <SectionIcon />],
  ["动态注解视图", <DynamicAnnIcon />], ["视图定向", <OrientIcon />, true], ["显示样式", <CubeIcon />, true],
  ["隐藏/显示项目", <EyeIcon />, true], ["编辑外观", <GhostSphereIcon />], ["应用布景", <SceneIcon />, true], ["视图设定", <MonitorIcon />, true],
];

const LibraryIcon = () => (
  <Icon>
    <path d="M2 5 5 2.500h6l2-1h9V18l-4 4.500-14-3L2 18z" fill="#f1f1f1" stroke="#555" />
    <path d="M2 5l4 1.500v13.500M6 6.500 9 4M8.500 7.500V21M8.500 7.500 12 4.500M13 7.500V22M13 7.500l3-3M18 7v15.500M18 7l4-4.500" stroke="#555" />
  </Icon>
);
const ExplorerIcon = () => (
  <Icon>
    <path d="M1.500 21V3.500h7l2 3h8V10" fill="#d5d5d5" stroke="#555" />
    <path d="M1.500 21.500 6.500 11l16-2-4 12.500z" fill="#f6f6f6" stroke="#555" />
  </Icon>
);
const PaletteIcon = () => (
  <Icon>
    <rect x="1" y="2" width="22" height="20" fill="#fff" stroke="#444" />
    <path d="M3.500 5H12v4.500H3.500zM15 5h5.500v4.500H15zM5.500 12.500h4v3H12V19.500H3.500v-4h2z" fill="#f6c722" stroke="#6b5410" />
    <path d="M15 13h8v9h-8z" fill="#eee" stroke="#444" />
    <path d="M15 14h8" stroke="#444" strokeWidth="2" />
  </Icon>
);

const taskTabs: [string, React.ReactNode][] = [
  ["资源", <HomeIcon />], ["设计库", <LibraryIcon />], ["文件探索器", <ExplorerIcon />], ["视图调色板", <PaletteIcon />],
  ["外观、布景和贴图", <Icon><ellipse cx="12" cy="21.500" rx="7" ry="1.500" fill="#bbb" stroke="none" /><Ball x={12} y={11.5} r={10.5} /></Icon>],
  ["自定义属性", <PropsIcon />],
];

const handles: [string, string][] = [
  ["0%", "0%"], ["50%", "0%"], ["100%", "0%"], ["0%", "50%"], ["100%", "50%"], ["0%", "100%"], ["50%", "100%"], ["100%", "100%"],
];

const Graphics = () => (
  <Viewport>
    <PlaneSketch>
      <PlaneName>前视基准面</PlaneName>
      {handles.map(([x, y]) => <Handle key={x + y} $x={x} $y={y} />)}
    </PlaneSketch>
    <Floating $x={488} $y={229} width="20" height="32" viewBox="0 0 20 32" fill="none" stroke="#e3161c" aria-hidden="true">
      <path d="M5.500 26.500V6M5.500 26.500H14M2.500 23.500l6 6m0-6-6 6M5.500 23v7M2 26.500h3" strokeWidth="1" />
      <path d="m5.500 1 2 6.500h-4zM19 26.500l-7 2v-4z" fill="#d40000" stroke="none" />
    </Floating>
    <Floating $x={334} $y={111} width="38" height="38" viewBox="0 0 38 38" aria-hidden="true">
      <circle cx="19" cy="19" r="18.500" fill="#fdfb2e" />
      <path d="M18.500 18.500v14l3.200-2.800 2.200 4.800 2.400-1.100-2.200-4.700h4z" fill="#000" />
    </Floating>
    <Triad width="44" height="44" viewBox="0 0 44 44" fill="none" aria-hidden="true">
      <path d="M7 36V16" stroke="#0a6a14" strokeWidth="2.500" />
      <path d="m7 11 3 7H4z" fill="#0a5a12" />
      <path d="M7 36.500h18" stroke="#c01010" strokeWidth="2.500" />
      <path d="m31 36.500-7 3v-6z" fill="#a80c0c" />
      <circle cx="7" cy="36.500" r="3.200" fill="#1414b4" />
      <path d="m6.500 2.500 2 2.500 2-2.500M8.500 5v2.500" stroke="#2c8a34" />
      <path d="m35.500 32 3.500 4.500m0-4.500L35.500 36.500" stroke="#f03a4a" />
    </Triad>
    <ViewName>*前视</ViewName>
    <SplitterHandle aria-label="折叠面板" />
    <Breadcrumb>
      <CrumbRoot aria-label="零件2"><PartIcon s={14} /></CrumbRoot>
      <CrumbLeaf><PlaneIcon />前视基准面</CrumbLeaf>
    </Breadcrumb>
    <ViewTools>
      {viewTools.map(([name, icon, drop]) => (
        <ViewTool key={name} aria-label={name} $drop={drop}>{icon}{drop && <Caret dim />}</ViewTool>
      ))}
    </ViewTools>
    <DocTools>
      <DocTool aria-label="左移窗格"><PageArrowIcon /></DocTool>
      <DocTool aria-label="右移窗格"><PageArrowIcon right /></DocTool>
      <DocTool aria-label="最小化文档"><MinIcon c="#666" /></DocTool>
      <DocTool aria-label="还原文档"><RestoreIcon c="#777" /></DocTool>
      <DocTool aria-label="关闭文档"><CloseIcon c="#666" /></DocTool>
    </DocTools>
    <Confirm>
      <svg width="72" height="58" viewBox="0 0 72 58" fill="none" aria-hidden="true">
        <path d="M22 1.500H3.500V15c0 6 4 11 10 11H26" stroke="#78a8ca" strokeWidth="1.800" />
        <path d="M24 26 33.500 16v5.500c5 0 8.500-2 11.500-6 0 8-4 14-11.500 14.500v6z" fill="#9cc6e2" stroke="#6a9cc0" strokeWidth="1.500" />
        <path d="m52 32 7 6.500 7-6.500 4.500 4.500-6.500 7 6.500 7L66 55l-7-6.500L52 55l-4.500-4.500 6.500-7-6.500-7z" fill="#f0787c" stroke="#d07478" strokeWidth="1.200" />
      </svg>
    </Confirm>
    <TaskPane>
      {taskTabs.map(([name, icon], i) => <TaskTab key={name} aria-label={name} $on={i === 4}>{icon}</TaskTab>)}
    </TaskPane>
  </Viewport>
);

/* ---------- bottom bars ---------- */

const ModelTabs = styled.nav`
  display: flex;
  height: 16px;
  padding-left: 1px;
  background: #f0f0f0;
  border-top: 1px solid #c9c9c9;
  border-bottom: 2px solid #b9b9b9;
`;
const StepButton = styled.button`
  display: flex;
  justify-content: center;
  width: 10px;
  height: 10px;
  padding-top: 2px;
  background: #b3b1c9;
  border-right: 1px solid #9795b0;
`;
const ModelTab = styled.button<{ $w: number; $on?: boolean }>`
  width: ${(p) => p.$w}px;
  white-space: nowrap;
  background: ${(p) => (p.$on ? "#f7f7f7" : "#d6d6d6")};
  border-right: 1px solid #b9b9b9;
`;
const StatusBar = styled.footer`
  display: flex;
  align-items: center;
  height: 12px;
  background: #f5f5f5;
  white-space: nowrap;
`;
const StatusText = styled.span<{ $w: number; $fill?: boolean }>`
  flex: ${(p) => (p.$fill ? "1 0 0" : "none")};
  width: ${(p) => p.$w}px;
`;
const TaskBar = styled.footer`
  display: flex;
  align-items: stretch;
  height: 24px;
  background: #1b262d;
  color: #f2f2f2;
`;
const TaskApps = styled.div`
  display: flex;
  width: 682px;
`;
const TaskApp = styled.button<{ $on?: boolean; $open?: boolean }>`
  display: flex;
  flex: 1;
  align-items: center;
  justify-content: center;
  background: ${(p) => (p.$on ? "#4b565c" : "transparent")};
  border-top: 2px solid transparent;
  border-bottom: 2px solid ${(p) => (p.$on || p.$open ? "#7fc4cd" : "transparent")};
  background-clip: border-box;
`;
const Tray = styled.div`
  display: flex;
  align-items: center;
  margin-left: auto;
`;
const TrayItem = styled.button<{ $w: number }>`
  display: flex;
  align-items: center;
  justify-content: center;
  width: ${(p) => p.$w}px;
`;

const App16 = ({ children }: { children: React.ReactNode }) => (
  <svg width="14" height="14" viewBox="0 0 16 16" fill="none" aria-hidden="true">{children}</svg>
);
const SwIcon = ({ year }: { year: string }) => (
  <svg width="16" height="16" viewBox="0 0 16 16" aria-hidden="true">
    <rect x="2" y="1" width="12" height="10" fill="#c01a22" />
    <text x="8" y="8" textAnchor="middle" fontSize="7" fontWeight="700" fill="#fff">SW</text>
    <text x="8" y="13" textAnchor="middle" fontSize="5" fontWeight="700" fill="#fff">{year}</text>
  </svg>
);
const OfficeIcon = ({ c, d, t }: { c: string; d: string; t: string }) => (
  <App16>
    <rect x="5" y="1" width="11" height="14" rx="1" fill={c} />
    <rect x="5" y="8" width="11" height="7" fill={d} />
    <rect x="0" y="4" width="9" height="9" rx="1" fill={d} />
    <text x="4.500" y="11" textAnchor="middle" fontSize="7" fontWeight="700" fill="#fff">{t}</text>
  </App16>
);
const CamIcon = ({ c }: { c: string }) => (
  <App16>
    <rect x="0.500" y="0.500" width="15" height="15" rx="1.500" fill={c} />
    <path d="M12 4.500H5.500v7H12" stroke="#fff" strokeWidth="2.200" />
  </App16>
);

const apps: [string, React.ReactNode][] = [
  ["开始", <App16><path d="M1 3 7 2.200v5.300H1zM8 2l7-1v6.500H8zM1 8.500h6v5.300L1 13zM8 8.500h7V15l-7-1z" fill="#fff" /></App16>],
  ["Edge", <App16><circle cx="8" cy="8" r="7.500" fill="#1b78c9" /><path d="M.8 7C2 .5 14-1.500 15.500 7c.3 3-3.500 4-5.500 2.500C11 7 8 4.500 5 5.500.8 7 .8 7 .8 7z" fill="#46c8a8" /><path d="M6 8c-1 4 4 6 8 4-4 5-10 3-10-1 0-2 1-3 2-3z" fill="#0d4f9c" /></App16>],
  ["查找", <App16><circle cx="9.500" cy="6" r="4.500" stroke="#f0882c" strokeWidth="2.500" /><path d="m6 9.500-5 5" stroke="#f0882c" strokeWidth="3" /><circle cx="9.500" cy="6" r="1.500" fill="#f0882c" /></App16>],
  ["Camtasia", <CamIcon c="#35b34a" />],
  ["文件夹", <App16><path d="M0 2h6l1.500 2H16v10H0z" fill="#f3c14b" /><path d="M0 6h16v8H0z" fill="#fbe08c" /><path d="M3.500 10h9v4h-9z" fill="#3f9be0" /></App16>],
  ["QQ", <App16><ellipse cx="8" cy="8" rx="5" ry="7" fill="#111" /><ellipse cx="8" cy="10.500" rx="3.500" ry="4" fill="#fff" /><path d="M3.500 7.500c3 1.500 6 1.500 9 0v2c-3 1.500-6 1.500-9 0z" fill="#e0332b" /><circle cx="6.500" cy="4.500" r="1.100" fill="#fff" /><circle cx="9.500" cy="4.500" r="1.100" fill="#fff" /><path d="M4 15h3.500M8.500 15H12" stroke="#f5a623" strokeWidth="1.500" /></App16>],
  ["书签", <App16><path d="M2 1h6v7H2z" fill="#d8443c" /><path d="M8 1h6v7H8z" fill="#4a80d8" /><path d="M2 8h6v4l-6 3z" fill="#45a859" /><path d="M8 8h6v7l-6-3z" fill="#f1bd36" /></App16>],
  ["MATLAB", <App16><path d="M0 9.500 5 7l5-6 2 3-5 9-2-2z" fill="#3d86c6" /><path d="M10 1c2 3 3.500 8 6 12-3-2-4-1-6 2-1-2-2-2-3-2 1-3 2-8 3-12z" fill="#e0632b" /></App16>],
  ["SOLIDWORKS 2018", <SwIcon year="2018" />],
  ["Excel", <OfficeIcon c="#33b277" d="#137a43" t="X" />],
  ["PowerPoint", <App16><circle cx="9" cy="8" r="7" fill="#e8694a" /><rect x="0" y="4" width="9" height="8" rx="1" fill="#c43e1c" /><text x="4.500" y="11" textAnchor="middle" fontSize="7" fontWeight="700" fill="#fff">P</text></App16>],
  ["Word", <OfficeIcon c="#3f8fe0" d="#185abd" t="W" />],
  ["浏览器", <App16><circle cx="8" cy="8" r="7.500" fill="#3d86d0" /><circle cx="8" cy="8" r="5" stroke="#dcecfb" strokeWidth="1.500" /><circle cx="8" cy="8" r="2" fill="#fff" /></App16>],
  ["AutoCAD", <App16><rect width="16" height="16" fill="#e07070" /><path d="M0 8 16 0v16H0z" fill="#c02a30" /><path d="m3 13 4.500-11H9l4 11h-3l-.8-2.500H6.500zM7.200 8.500h1.500L8 6z" fill="#2a0a0a" /></App16>],
  ["办公", <App16><rect width="16" height="16" rx="2" fill="#fff" /><path d="M2 4h8v4H6z" fill="#2f6fe4" /><path d="M10 4h4l-4 9H7z" fill="#2db3f0" /></App16>],
  ["图片", <App16><rect x="1" y="3" width="14" height="9" fill="#e6e2ee" /><path d="M3 5h4v4H3z" fill="#5f82b8" /><path d="M9 6h5v4H9z" fill="#b8586c" /></App16>],
  ["微信", <App16><ellipse cx="6" cy="6" rx="6" ry="5" fill="#4fc35a" /><ellipse cx="11" cy="10.500" rx="5" ry="4.200" fill="#eee" /><circle cx="4" cy="5" r=".8" fill="#1a5a22" /><circle cx="8" cy="5" r=".8" fill="#1a5a22" /></App16>],
  ["Chrome", <App16><circle cx="8" cy="8" r="7.500" fill="#3aa655" /><path d="M8 8 1.500 4.200A7.500 7.500 0 0 1 14.700 4.700z" fill="#e23c30" /><path d="M8 8l6.700-3.300A7.500 7.500 0 0 1 8 15.500z" fill="#f7c52e" /><circle cx="8" cy="8" r="3.500" fill="#fff" /><circle cx="8" cy="8" r="2.700" fill="#3f83ee" /></App16>],
  ["dp", <App16><circle cx="8" cy="8" r="7.800" fill="#dd2228" /><text x="8" y="11" textAnchor="middle" fontSize="8" fontWeight="700" fontStyle="italic" fill="#fff">dp</text></App16>],
  ["笔记", <App16><rect width="16" height="16" rx="2.500" fill="#f3f7ff" /><path d="M8 3H5L3.500 12h9L13.500 5M8 9l5-6" stroke="#3c6fd8" strokeWidth="1.500" /></App16>],
  ["PDF", <App16><rect width="16" height="16" rx="2" fill="#e23a32" /><path d="M4 8V4.500h6a2.300 2.300 0 0 1 0 5H8M6 9.500a1.500 1.500 0 1 0 1.500 1.500V7.500" stroke="#fff" strokeWidth="1.500" /></App16>],
  ["SOLIDWORKS 2021", <SwIcon year="2021" />],
  ["录制", <CamIcon c="#e24a3c" />],
];

export default function App() {
  return (
    <Shell>
      <GlobalStyle />
      <Title />
      <RibbonBar />
      <TabStrip>
        {tabs.map(([label, w, latin]) => (
          <RibbonTab key={label} $w={w} $latin={latin} $on={label === "草图"}>{label}</RibbonTab>
        ))}
      </TabStrip>
      <Main>
        <Panel />
        <Graphics />
      </Main>
      <ModelTabs>
        {["首个", "上一个", "下一个", "末个"].map((n, i) => (
          <StepButton key={n} aria-label={n}>
            <svg width="5" height="5" viewBox="0 0 5 5" aria-hidden="true"><path d={i < 2 ? "M4 0v5L1 2.500z" : "M1 0v5l3-2.500z"} fill="#8482a0" /></svg>
          </StepButton>
        ))}
        <ModelTab $w={33} $on>模型</ModelTab>
        <ModelTab $w={45}>3D 视图</ModelTab>
        <ModelTab $w={64}>运动算例 1</ModelTab>
      </ModelTabs>
      <StatusBar>
        <StatusText $w={200} $fill>SOLIDWORKS Premium 2023 SP0.1</StatusText>
        <StatusText $w={74}>-207.57mm</StatusText>
        <StatusText $w={57}>58.13mm</StatusText>
        <StatusText $w={57}>0mn欠定义</StatusText>
        <StatusText $w={106}>在编辑 草图1</StatusText>
        <StatusText $w={38}>自定义</StatusText>
        <StatusText $w={12}>·</StatusText>
        <svg width="16" height="12" viewBox="0 0 16 12" fill="#ddd" stroke="#777" aria-hidden="true">
          <path d="M2 2h5l6 5-4 4-7-5z" /><circle cx="4.500" cy="4" r=".8" />
        </svg>
      </StatusBar>
      <TaskBar>
        <TaskApps>
          {apps.map(([name, icon]) => (
            <TaskApp key={name} aria-label={name} $on={name === "SOLIDWORKS 2021"} $open={name === "录制"}>{icon}</TaskApp>
          ))}
        </TaskApps>
        <Tray>
          <TrayItem $w={20} aria-label="显示隐藏的图标">
            <svg width="10" height="6" viewBox="0 0 10 6" fill="none" stroke="#eee" aria-hidden="true"><path d="m.5 5.500 4.500-4.500 4.500 4.500" /></svg>
          </TrayItem>
          <TrayItem $w={18} aria-label="麦克风">
            <svg width="8" height="12" viewBox="0 0 8 12" fill="none" stroke="#eee" aria-hidden="true"><rect x="2" y=".5" width="4" height="7" rx="1" fill="#eee" /><path d="M.5 6c0 5 7 5 7 0M4 9.500V12" /></svg>
          </TrayItem>
          <TrayItem $w={20} aria-label="网络">
            <svg width="11" height="11" viewBox="0 0 11 11" fill="none" stroke="#ccc" aria-hidden="true"><path d="M1 10A9.500 9.500 0 0 1 10.500 1M4 10.500A7 7 0 0 1 10.500 4M7 10.500A4 4 0 0 1 10.500 7" /><circle cx="9.500" cy="9.800" r="1" fill="#eee" stroke="none" /></svg>
          </TrayItem>
          <TrayItem $w={18}>中</TrayItem>
          <TrayItem $w={26} aria-label="输入法">
            <svg width="14" height="14" viewBox="0 0 14 14" fill="none" aria-hidden="true">
              <path d="M1 2.500 12.500 1l.8 10.500L2 13z" fill="#e2572b" />
              <path d="M10 4.500C7 3 4.500 3.700 4.500 5.300c0 2 5 1.200 5 3.200 0 1.700-3 2-5.300.8" stroke="#fff" strokeWidth="1.700" />
            </svg>
          </TrayItem>
          <TrayItem $w={40}>21:12</TrayItem>
          <TrayItem $w={26} aria-label="通知">
            <svg width="14" height="13" viewBox="0 0 14 13" aria-hidden="true"><path d="M0.500 0.500h13v9H9L6.500 12.500V9.500h-6z" fill="#fff" /><path d="M3 3h8M3 5h8M3 7h6" stroke="#1b262d" /></svg>
          </TrayItem>
          <TrayItem $w={14} aria-label="显示桌面">
            <svg width="1" height="24" viewBox="0 0 1 24" aria-hidden="true"><path d="M.5 0v24" stroke="#56616a" /></svg>
          </TrayItem>
        </Tray>
      </TaskBar>
    </Shell>
  );
}
